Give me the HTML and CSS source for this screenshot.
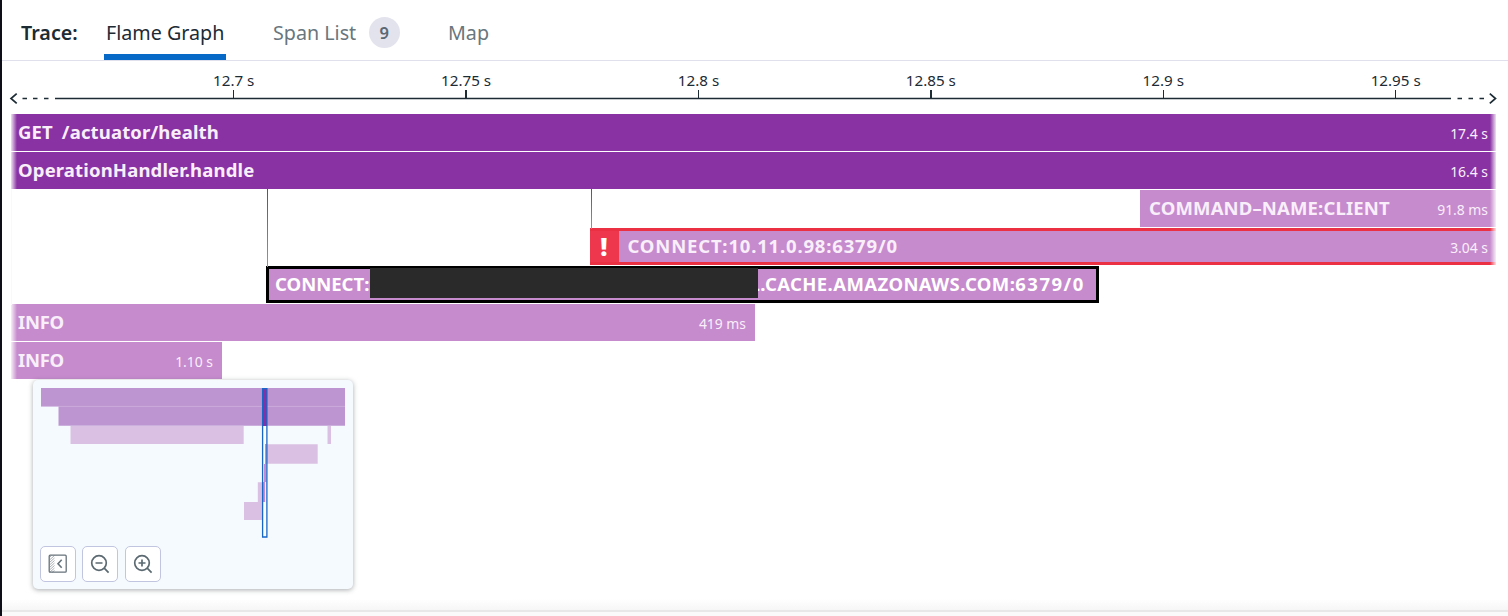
FILE: index.html
```html
<!DOCTYPE html>
<html lang="en">
<head>
<meta charset="utf-8">
<title>Trace</title>
<link rel="stylesheet" href="styles.css">
</head>
<body>
<main class="panel">
  <nav class="tabs">
    <span class="tabs-title">Trace:</span>
    <a class="tab tab-active">Flame Graph</a>
    <a class="tab tab-spans">Span List <span class="count">9</span></a>
    <a class="tab tab-map">Map</a>
  </nav>

  <section class="axis">
    <div class="ticks">
      <span class="tick">12.7 s</span>
      <span class="tick">12.75 s</span>
      <span class="tick">12.8 s</span>
      <span class="tick">12.85 s</span>
      <span class="tick">12.9 s</span>
      <span class="tick">12.95 s</span>
    </div>
    <svg class="axis-line" width="1506" height="14" viewBox="2 0 1506 14" fill="none" stroke="#1c2b34" stroke-width="1.4">
      <path d="M22.500 7.500h4.500M33 7.500h4.500M44 7.500h4.500M55 7.500H1451M1457.500 7.500h4.500M1468.500 7.500h4.500M1479.500 7.500h4.500"/>
      <path stroke-width="1.700" d="M16.700 2.600L11 7.500L16.700 12.400M1489.800 2.600L1495.500 7.500L1489.800 12.400"/>
    </svg>
  </section>

  <section class="flame">
    <div class="row"><div class="bar dark full"><span class="name n-get">GET /actuator/health</span><span class="time">17.4 s</span></div></div>
    <div class="row"><div class="bar dark full"><span class="name n-op">OperationHandler.handle</span><span class="time">16.4 s</span></div></div>
    <div class="row"><div class="bar client"><span class="name n-client">COMMAND–NAME:CLIENT</span><span class="time">91.8 ms</span></div></div>
    <div class="row"><div class="bar error"><span class="bang">!</span><span class="name n-ip">CONNECT:10.11.0.98:6379/0</span><span class="time">3.04 s</span></div></div>
    <div class="row"><div class="bar selected"><span class="name n-connect">CONNECT:</span><span class="redacted"></span><span class="name n-cache">L.CACHE.AMAZONAWS.COM:<span class="port">6379/0</span></span></div></div>
    <div class="row"><div class="bar info-long"><span class="name n-info">INFO</span><span class="time">419 ms</span></div></div>
    <div class="row"><div class="bar info-short"><span class="name n-info">INFO</span><span class="time">1.10 s</span></div></div>
    <i class="link link-a"></i>
    <i class="link link-b"></i>
    <i class="link link-edge"></i>
    <i class="fade fade-left"></i>
    <i class="fade fade-right"></i>
  </section>

  <aside class="minimap">
    <svg class="overview" width="305" height="151" viewBox="41 388 305 151">
      <g fill="#bd96d1"><path d="M41 388h304v18.200H41zM58.500 406.500H345v19.200H58.500z"/></g>
      <path d="M41 406.300H345" stroke="#c9a5da" stroke-width=".7"/>
      <path fill="#dac1e4" d="M70.500 426h173.200v18H70.500zM327.500 426h3.500v18h-3.500zM265 444.300h52.700v19.400H265zM257.800 482.200h5.500v20h-5.500zM244 502h19v18h-19z"/>
      <path fill="#fff" d="M263 426h3.500v111H263z"/>
      <path fill="#892fa1" d="M263 388h4v38h-4z"/>
      <path fill="#c78ccd" d="M265 444h1.500v20H265zM264 464h2.300v18H264zM263 482h2.200v20H263z"/>
      <path d="M262.600 388.500h4.300v148.500h-4.300z" fill="none" stroke="#1767c8" stroke-width="1.300"/>
    </svg>
    <div class="controls">
      <button class="control" aria-label="Collapse">
        <svg width="20" height="20" viewBox="0 0 20 20" fill="none" stroke="#66727a" stroke-width="1.300">
          <path d="M1.500 3.500l2-2M1.500 6l5-4.500M1.500 8.500l5-4.500M1.500 11l5-4.500M1.500 13.500l5-4.500M1.500 16l5-4.500M1.500 18.500l5-4.500M4 18.500l2.500-2" stroke-width=".7" opacity=".8"/>
          <rect x="1.200" y="1.200" width="17" height="17" rx="1"/>
          <path d="M13.700 5.800L10 9.800l3.700 4" stroke-width="1.600"/>
        </svg>
      </button>
      <button class="control" aria-label="Zoom out">
        <svg width="20" height="20" viewBox="0 0 20 20" fill="none" stroke="#5b6971" stroke-width="1.700">
          <circle cx="9" cy="9" r="7.300"/><path d="M14.200 14.200l4.400 4.400M5.500 9h7"/>
        </svg>
      </button>
      <button class="control" aria-label="Zoom in">
        <svg width="20" height="20" viewBox="0 0 20 20" fill="none" stroke="#5b6971" stroke-width="1.700">
          <circle cx="9" cy="9" r="7.300"/><path d="M14.200 14.200l4.400 4.400M5.500 9h7M9 5.500v7"/>
        </svg>
      </button>
    </div>
  </aside>
  <div class="bottom-edge"></div>
</main>
</body>
</html>
```
FILE: styles.css
```css
* { box-sizing: border-box; }
body {
  margin: 0;
  background: #fff;
  color: #1c2b34;
  font-family: "Noto Sans", sans-serif;
  overflow: hidden;
}
.panel {
  position: relative;
  height: 616px;
  border-left: 2px solid #0d0e18;
  display: flex;
  flex-direction: column;
}

/* Tabs */
.tabs {
  height: 61px;
  flex: none;
  border-bottom: 1px solid #dfe0ec;
  display: flex;
  padding-left: 19px;
  font-size: 19.700px;
  line-height: 66px;
  white-space: nowrap;
}
.tabs-title { width: 83px; font-weight: 600; }
.tab { height: 60px; color: #69767e; }
.tab-active {
  width: 122px;
  padding-left: 2px;
  color: #1c2b34;
  border-bottom: 6px solid #0669c8;
}
.tab-spans { margin-left: 47px; width: 175px; display: flex; }
.count {
  width: 31px;
  height: 31px;
  margin: 17px 0 0 12.500px;
  border-radius: 50%;
  background: #e3e3ed;
  color: #5b6873;
  font-size: 16.500px;
  font-weight: 600;
  line-height: 32px;
  text-align: center;
}

/* Time axis */
.axis { height: 53px; flex: none; }
.ticks {
  height: 37px;
  padding: 9px 0 0 115.5px;
  display: grid;
  grid-template-columns: repeat(6, 232.4px);
  margin-bottom: -7px;
}
.tick {
  font-size: 15.200px;
  line-height: 20px;
  text-align: center;
  display: flex;
  flex-direction: column;
  align-items: center;
}
.tick::after { content: ""; width: 1.5px; height: 8px; background: #1c2b34; }
.axis-line { display: block; }

/* Flame graph rows */
.flame {
  position: relative;
  height: 266px;
  flex: none;
  display: grid;
  grid-template-rows: repeat(7, 38px);
}
.row { display: flex; margin-left: 9px; width: 1485px; }
.bar {
  height: 37px;
  display: flex;
  align-items: center;
  padding: 0 8px 0 7px;
  background: #c68bcd;
  color: #f9effb;
  white-space: nowrap;
}
.dark { background: #8932a3; }
.full { width: 1485px; }
.client { margin-left: 1129px; width: 356px; padding-left: 9px; }
.error {
  margin-left: 578.500px;
  width: 906.500px;
  border: solid #ec3044;
  border-width: 3px 0;
  padding-left: 0;
}
.bang {
  width: 29px;
  height: 31px;
  margin-right: 9px;
  background: #ee374d;
  color: #fff;
  font-size: 25px;
  font-weight: 900;
  line-height: 31px;
  text-align: center;
}
.selected {
  margin-left: 255px;
  width: 833px;
  border: 3px solid #000;
  padding-left: 6px;
  color: #fff;
}
.redacted {
  width: 388px;
  height: 30px;
  margin: 0 0 4px -2px;
  background: #2a2a2a;
  flex: none;
  z-index: 1;
}
.info-long { width: 744px; padding-right: 9px; }
.info-short { width: 211px; padding-right: 9px; }
.name { font-size: 18.500px; font-weight: 700; line-height: 34px; margin-bottom: 1px; }
.n-get { letter-spacing: .15px; word-spacing: 4px; }
.n-op { letter-spacing: .15px; }
.n-client { letter-spacing: .15px; }
.n-ip { letter-spacing: .82px; }
.n-info { letter-spacing: -.3px; }
.n-connect { width: 97px; flex: none; overflow: hidden; }
.n-cache { margin-left: -8.500px; letter-spacing: .4px; }
.port { letter-spacing: 1.500px; }
.time { margin-left: auto; font-size: 13.900px; line-height: 34px; padding-top: 2px; }

/* Parent connectors and edge fades lie over the rows */
.link { position: absolute; width: 1px; background: linear-gradient(#892fa1, #b87bc5); }
.link-a { left: 265px; top: 75px; height: 78px; }
.link-b { left: 589px; top: 75px; height: 40px; }
.link-edge { left: 9px; top: 75px; height: 116px; background: #efdef3; }
.fade { position: absolute; top: 0; width: 6px; height: 266px; }
.fade-left { left: 9px; background: linear-gradient(90deg, rgba(255,255,255,.85), rgba(255,255,255,0)); }
.fade-right { left: 1488px; background: linear-gradient(270deg, rgba(255,255,255,.85), rgba(255,255,255,0)); }

/* Minimap floats over the graph */
.minimap {
  position: absolute;
  left: 31px;
  top: 380px;
  width: 320px;
  height: 209px;
  padding: 8px 7px 0 8px;
  border-radius: 5px;
  background: #f5fafe;
  box-shadow: 0 1px 5px rgba(30, 35, 40, .38);
}
.overview { display: block; }
.controls { display: flex; gap: 6.500px; margin: 7px 0 0 -1.300px; }
.control {
  width: 36px;
  height: 36px;
  padding: 0;
  border: 1.500px solid #c1c5df;
  border-radius: 5px;
  background: #fff;
  display: grid;
  place-items: center;
}
.bottom-edge {
  margin-top: auto;
  height: 17px;
  background: linear-gradient(#fff 0, #f6f6f6 11px, #e8e8e8 11px, #e8e8e8 13px, #fafafa 13px);
}
```
